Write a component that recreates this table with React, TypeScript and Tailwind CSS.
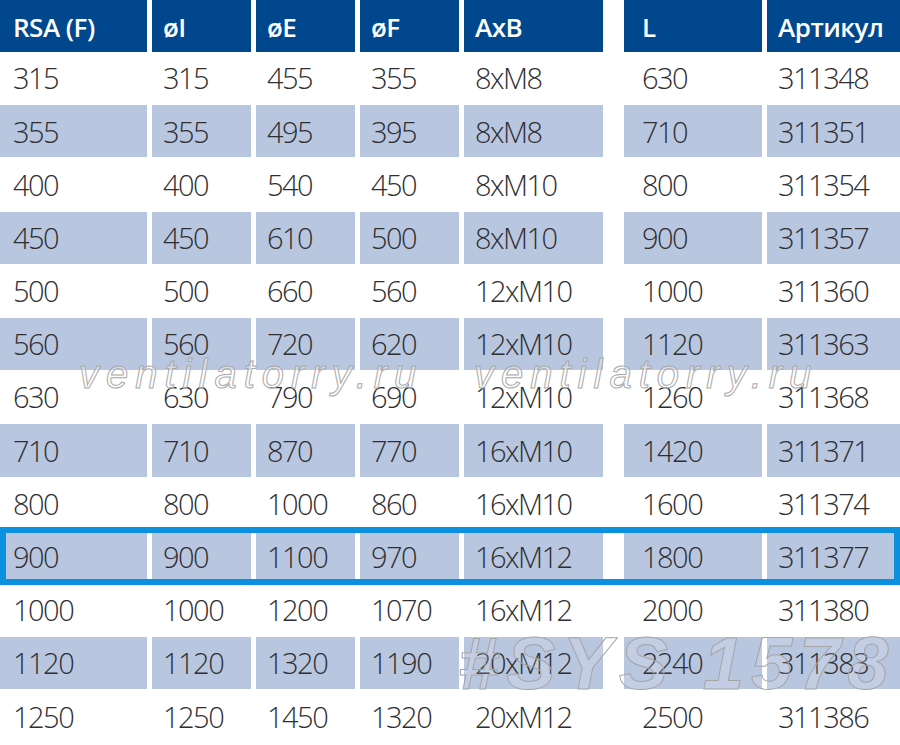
const headers = ["RSA (F)", "øI", "øE", "øF", "AxB", "L", "Артикул"];

const rows = [
  ["315", "315", "455", "355", "8xM8", "630", "311348"],
  ["355", "355", "495", "395", "8xM8", "710", "311351"],
  ["400", "400", "540", "450", "8xM10", "800", "311354"],
  ["450", "450", "610", "500", "8xM10", "900", "311357"],
  ["500", "500", "660", "560", "12xM10", "1000", "311360"],
  ["560", "560", "720", "620", "12xM10", "1120", "311363"],
  ["630", "630", "790", "690", "12xM10", "1260", "311368"],
  ["710", "710", "870", "770", "16xM10", "1420", "311371"],
  ["800", "800", "1000", "860", "16xM10", "1600", "311374"],
  ["900", "900", "1100", "970", "16xM12", "1800", "311377"],
  ["1000", "1000", "1200", "1070", "16xM12", "2000", "311380"],
  ["1120", "1120", "1320", "1190", "20xM12", "2240", "311383"],
  ["1250", "1250", "1450", "1320", "20xM12", "2500", "311386"],
];

// column widths + left padding, taken from the reference
const cols = [
  "w-[147px] pl-[13px]",
  "w-[99px] pl-[11px]",
  "w-[99px] pl-[11px]",
  "w-[99px] pl-[11px]",
  "w-[139px] pl-[11px]",
  "w-[138px] pl-[18px] ml-[16px]",
  "w-[133px] pl-[11px]",
];

const HIGHLIGHT = 9;

const App = () => {
  return (
    <div className="relative w-[900px] h-[745px] overflow-hidden bg-white font-['Open_Sans',sans-serif]">
      <div className="flex flex-col">
        <div className="flex gap-[5px] h-[52px]">
          {headers.map((h, i) => (
            <div
              key={h}
              className={`${cols[i]} flex items-center pt-[3px] bg-[#00478e] text-white text-[26px] font-semibold tracking-[-0.5px]`}
            >
              {h}
            </div>
          ))}
        </div>

        {rows.map((row, r) => {
          const shaded = r % 2 === 1;
          return (
            <div key={r} className="relative flex gap-[5px] h-[53.2px] pb-px">
              {row.map((v, i) => (
                <div
                  key={i}
                  className={`${cols[i]} flex items-center text-[29px] font-light tracking-[-1.5px] text-[#2f2f33] ${
                    shaded ? "bg-[#b9c6e0]" : ""
                  }`}
                >
                  {v}
                </div>
              ))}
              {r === HIGHLIGHT && (
                <div className="absolute left-0 right-0 -top-[4px] -bottom-[1px] border-[6px] border-[#0b8fdf]" />
              )}
            </div>
          );
        })}
      </div>

      {/* watermarks */}
      <div className="pointer-events-none absolute left-[79px] top-[354px] leading-none text-[40px] italic tracking-[7px] font-['Liberation_Sans',sans-serif] text-white/40 [-webkit-text-stroke:1px_#a9a9a9]">
        ventilatorry.ru
      </div>
      <div className="pointer-events-none absolute left-[474px] top-[354px] leading-none text-[40px] italic tracking-[7px] font-['Liberation_Sans',sans-serif] text-white/40 [-webkit-text-stroke:1px_#a9a9a9]">
        ventilatorry.ru
      </div>
      <div className="pointer-events-none absolute left-[458px] top-[627px] leading-none text-[74px] italic font-bold tracking-[7px] font-['Liberation_Sans',sans-serif] text-white/15 [-webkit-text-stroke:1px_#a5a5a5]">
        #SYS 1578
      </div>
    </div>
  );
};

export default App;
